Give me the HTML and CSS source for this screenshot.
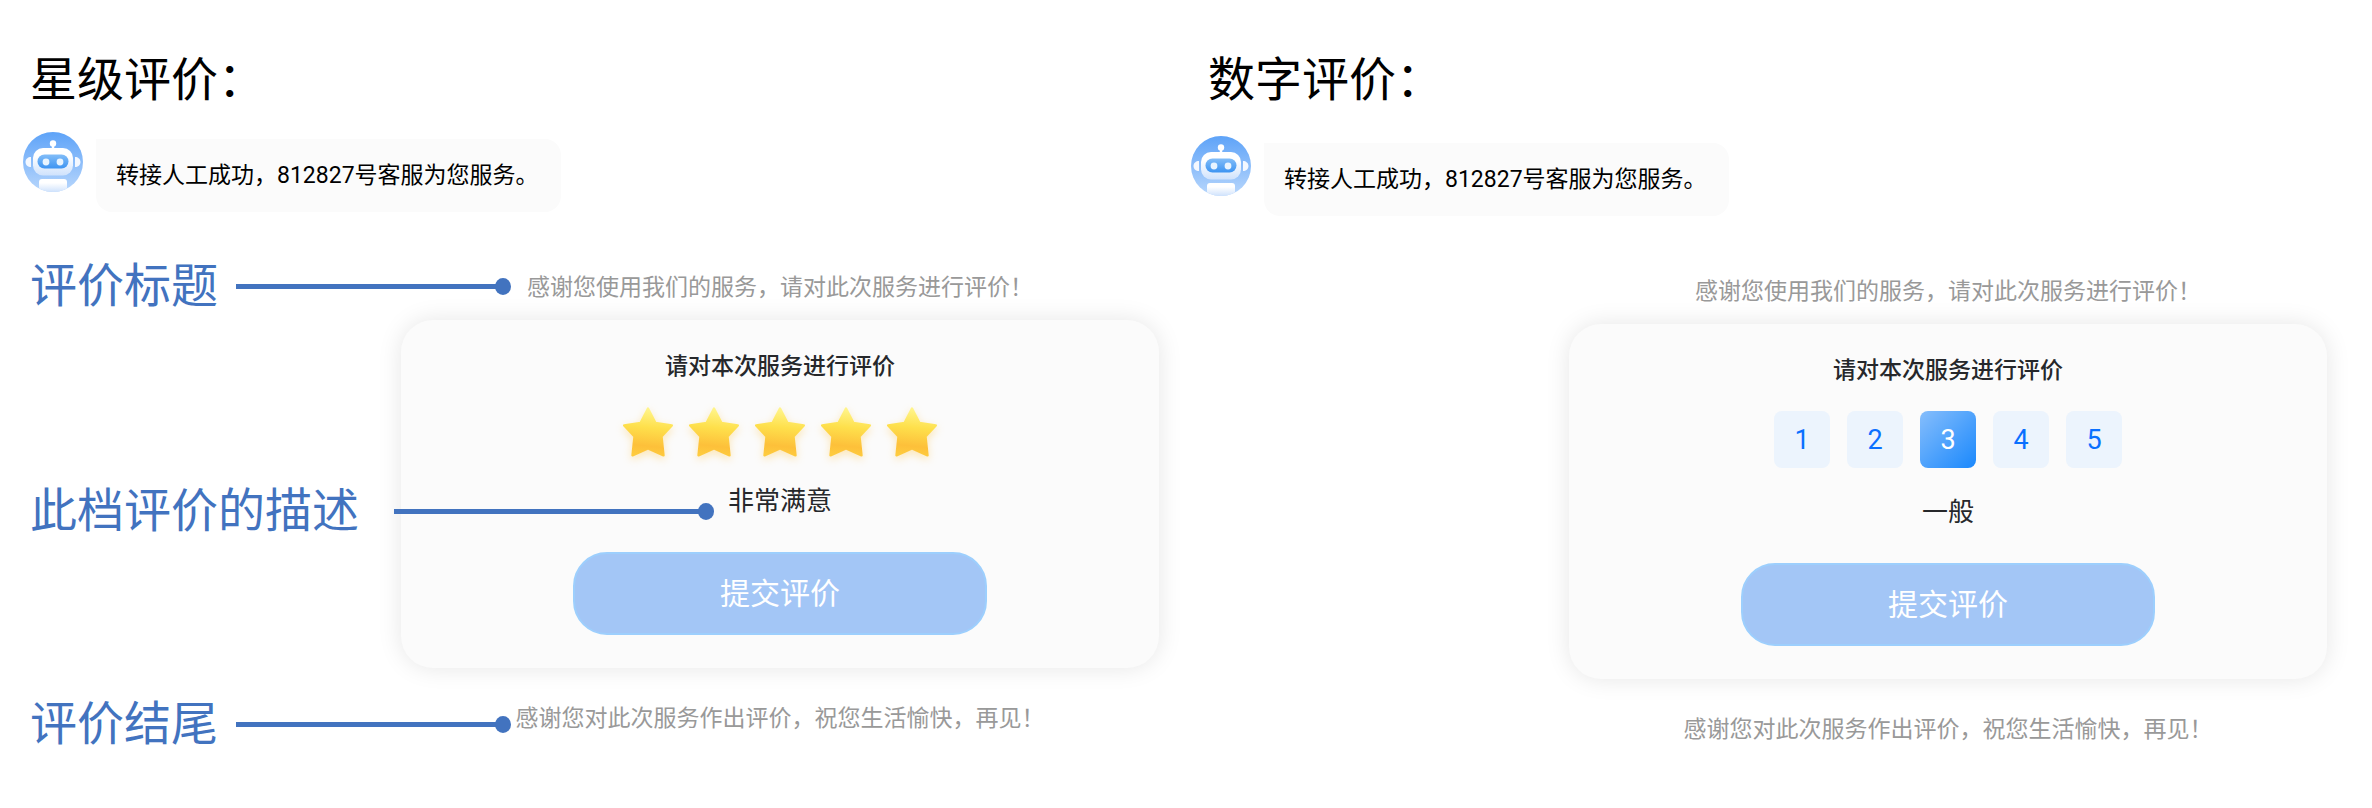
FILE: index.html
```html
<!DOCTYPE html>
<html lang="zh-CN">
<head>
    <meta charset="UTF-8">
    <meta name="viewport" content="width=device-width, initial-scale=1.0">
    <title>服务评价</title>
    <link rel="stylesheet" href="styles.css">
</head>
<body>
    <!-- 公用图形 -->
    <svg class="defs" aria-hidden="true">
        <defs>
            <linearGradient id="avatarBg" x1="0" y1="0" x2="0" y2="1">
                <stop offset="0" stop-color="#5ea3f8"/>
                <stop offset="1" stop-color="#b9d7fc"/>
            </linearGradient>
            <linearGradient id="headBg" x1="0" y1="0" x2="0" y2="1">
                <stop offset="0.3" stop-color="#ffffff"/>
                <stop offset="1" stop-color="#cfe2fc"/>
            </linearGradient>
            <linearGradient id="faceBg" x1="0" y1="0" x2="0" y2="1">
                <stop offset="0" stop-color="#82bdf8"/>
                <stop offset="1" stop-color="#3d94f2"/>
            </linearGradient>
            <linearGradient id="starBg" x1="0.55" y1="0" x2="0.45" y2="1">
                <stop offset="0" stop-color="#fff58c"/>
                <stop offset="0.4" stop-color="#fee04c"/>
                <stop offset="0.8" stop-color="#fdc03a"/>
                <stop offset="1" stop-color="#fecb3e"/>
            </linearGradient>
            <clipPath id="avatarClip"><circle cx="30" cy="30" r="30"/></clipPath>
            <symbol id="robot" viewBox="0 0 60 60">
                <g clip-path="url(#avatarClip)">
                    <rect width="60" height="60" fill="url(#avatarBg)"/>
                    <circle cx="30" cy="11.5" r="3.2" fill="#fff"/>
                    <rect x="28.8" y="12" width="2.4" height="6" fill="#fff"/>
                    <path d="M8 25v10c-3 0-5.5-2-5.5-5s2.5-5 5.5-5zM52 25v10c3 0 5.5-2 5.5-5s-2.500-5-5.5-5z" fill="#f4f8ff"/>
                    <rect x="10" y="16" width="40" height="27.500" rx="10" fill="url(#headBg)"/>
                    <rect x="14.500" y="22.500" width="31" height="14" rx="7" fill="url(#faceBg)"/>
                    <circle cx="23" cy="30" r="3.400" fill="#e8f4ff"/>
                    <circle cx="37" cy="30" r="3.400" fill="#e8f4ff"/>
                    <path d="M16 60V50q0-3 3-3h22q3 0 3 3v10z" fill="url(#headBg)"/>
                </g>
            </symbol>
            <symbol id="star" viewBox="0 0 50 50">
                <path d="M25 1.500L32.500 16L48.800 18.500L38.500 29.500L40.500 48.300L25 41.500L9.500 48.300L11.500 29.500L1.200 18.500L17.500 16Z" fill="url(#starBg)" stroke="url(#starBg)" stroke-width="2.400" stroke-linejoin="round"/>
            </symbol>
        </defs>
    </svg>

    <main class="page">
        <section class="panel">
            <h2 class="panel-title">星级评价：</h2>
            <div class="message">
                <svg class="avatar"><use href="#robot"/></svg>
                <p class="bubble">转接人工成功，812827号客服为您服务。</p>
            </div>
            <div class="survey">
                <div class="callout callout-intro"><span>评价标题</span><i class="line"></i></div>
                <p class="tip tip-intro">感谢您使用我们的服务，请对此次服务进行评价！</p>

                <div class="callout callout-desc"><span>此档评价的描述</span><i class="line"></i></div>
                <form class="card">
                    <h3 class="card-title">请对本次服务进行评价</h3>
                    <div class="stars">
                        <button type="button" class="star" aria-label="1"><svg><use href="#star"/></svg></button>
                        <button type="button" class="star" aria-label="2"><svg><use href="#star"/></svg></button>
                        <button type="button" class="star" aria-label="3"><svg><use href="#star"/></svg></button>
                        <button type="button" class="star" aria-label="4"><svg><use href="#star"/></svg></button>
                        <button type="button" class="star" aria-label="5"><svg><use href="#star"/></svg></button>
                    </div>
                    <p class="desc">非常满意</p>
                    <button type="button" class="submit">提交评价</button>
                </form>

                <div class="callout callout-end"><span>评价结尾</span><i class="line"></i></div>
                <p class="tip tip-end">感谢您对此次服务作出评价，祝您生活愉快，再见！</p>
            </div>
        </section>

        <section class="panel panel-number">
            <h2 class="panel-title">数字评价：</h2>
            <div class="message">
                <svg class="avatar"><use href="#robot"/></svg>
                <p class="bubble">转接人工成功，812827号客服为您服务。</p>
            </div>
            <div class="survey">
                <p class="tip tip-intro">感谢您使用我们的服务，请对此次服务进行评价！</p>

                <form class="card">
                    <h3 class="card-title">请对本次服务进行评价</h3>
                    <div class="numbers">
                        <button type="button" class="number">1</button>
                        <button type="button" class="number">2</button>
                        <button type="button" class="number active">3</button>
                        <button type="button" class="number">4</button>
                        <button type="button" class="number">5</button>
                    </div>
                    <p class="desc">一般</p>
                    <button type="button" class="submit">提交评价</button>
                </form>

                <p class="tip tip-end">感谢您对此次服务作出评价，祝您生活愉快，再见！</p>
            </div>
        </section>
    </main>
</body>
</html>
```
FILE: styles.css
```css
* {
    box-sizing: border-box;
}

body {
    margin: 0;
    background-color: #fff;
    font-family: Roboto, "Noto Sans CJK SC", sans-serif;
    color: #000;
}

h2, h3, p {
    margin: 0;
}

button {
    border: none;
    font-family: inherit;
    cursor: pointer;
}

.defs {
    position: absolute;
    width: 0;
    height: 0;
}

.page {
    display: grid;
    grid-template-columns: 1fr 1fr;
    padding: 50px 36px 40px 0;
}

.panel {
    padding-right: 9px;
}

.panel-title {
    padding-left: 30px;
    margin-bottom: 22px;
    font-size: 47px;
    font-weight: 400;
    line-height: 60px;
}

.panel-number .panel-title {
    padding-left: 40px;
    margin-bottom: 26px;
}

/* 客服消息 */
.message {
    display: flex;
    gap: 13px;
    padding-left: 23px;
    margin-bottom: 44px;
}

.avatar {
    width: 60px;
    height: 60px;
}

.bubble {
    margin-top: 7px;
    padding: 20px;
    width: 465px;
    background-color: #fbfbfb;
    border-radius: 0 16px 16px 16px;
    font-size: 23px;
    line-height: 33px;
    white-space: nowrap;
}

/* 评价区域 */
.survey {
    display: grid;
    grid-template-columns: 401px 1fr;
    grid-template-rows: 60px auto auto;
}

.tip {
    grid-column: 2;
    font-size: 23px;
    line-height: 63px;
    text-align: center;
    color: #999;
}

.tip-intro {
    grid-row: 1;
}

.tip-end {
    grid-row: 3;
}

.card {
    grid-column: 2;
    grid-row: 2;
    display: flex;
    flex-direction: column;
    align-items: center;
    margin: 4px 0 19px;
    padding: 31px 30px 33px;
    background-color: #fbfbfb;
    border-radius: 32px;
    box-shadow: 0 0 24px rgba(0, 0, 0, 0.1);
}

.card-title {
    font-size: 23px;
    font-weight: 500;
    line-height: 32px;
    color: #26282b;
}

.stars,
.numbers {
    display: flex;
    margin: 24px 0 26px;
}

.stars {
    gap: 16px;
}

.numbers {
    gap: 17px;
}

.star {
    padding: 0;
    width: 50px;
    height: 50px;
    background: none;
}

.star svg {
    display: block;
    width: 50px;
    height: 50px;
    filter: drop-shadow(0 3px 4px rgba(254, 200, 80, 0.4));
}

.number {
    padding: 0;
    width: 56px;
    height: 57px;
    background-color: #ecf4fd;
    border-radius: 8px;
    font-size: 27px;
    color: #0a70ff;
}

.number.active {
    background: linear-gradient(135deg, #86befc, #1a88fc);
    color: #fff;
}

.desc {
    margin-bottom: 33px;
    font-size: 26px;
    line-height: 36px;
    color: #26282b;
}

.submit {
    padding: 0 0 6px;
    width: 414px;
    height: 83px;
    background-color: #a3c6f6;
    border: 2px solid #9dcffd;
    border-radius: 34px;
    font-size: 30px;
    color: #fff;
}

/* 标注 */
.callout {
    grid-column: 1 / -1;
    z-index: 1;
    display: flex;
    align-items: center;
    gap: 18px;
    padding-left: 30px;
    width: 503px;
    font-size: 47px;
    line-height: 60px;
    white-space: nowrap;
    color: #4273bf;
}

.callout-intro {
    grid-row: 1;
}

.callout-desc {
    grid-row: 2;
    align-self: start;
    gap: 35px;
    margin-top: 165px;
    width: 706px;
}

.callout-end {
    grid-row: 3;
    margin-top: 7px;
}

.line {
    position: relative;
    flex: 1;
    height: 5px;
    background-color: #4273bf;
}

.line::after {
    content: "";
    position: absolute;
    top: -6px;
    right: -8px;
    width: 16px;
    height: 17px;
    border-radius: 50%;
    background-color: #4273bf;
}
```
